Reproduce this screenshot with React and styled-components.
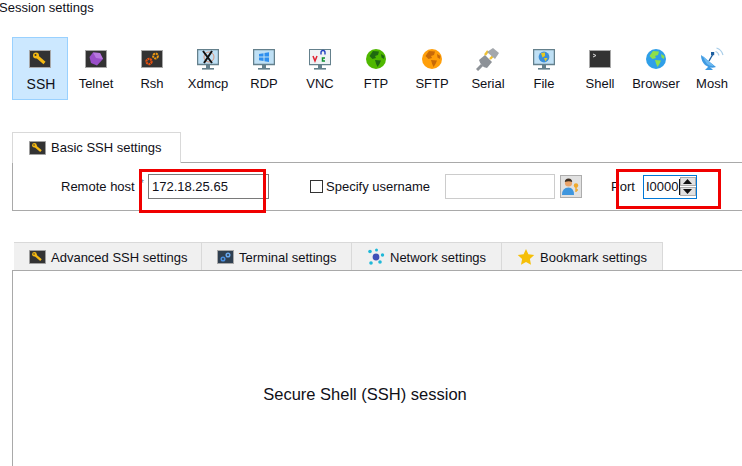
import React from 'react'
import styled, { createGlobalStyle } from 'styled-components'

const Global = createGlobalStyle`
  html, body { margin: 0; padding: 0; background: #fff; }
  body { font-family: "Liberation Sans", Arial, sans-serif; font-size: 13px; color: #101018; }
`

const KeyIcon = ({ size = 22, height = 18 }) => (
  <svg width={size} height={height} viewBox="0 0 22 18">
    <rect x="0.5" y="0.5" width="21" height="17" fill="#333" stroke="#a8a8a8" />
    <circle cx="7" cy="5.5" r="3" fill="#f5b912" />
    <path d="M8 6.5 L15.5 13" stroke="#f5b912" strokeWidth="3" />
    <circle cx="6.5" cy="5" r="1" fill="#333" />
  </svg>
)

const GemIcon = () => (
  <svg width="22" height="18" viewBox="0 0 22 18">
    <rect x="0.5" y="0.5" width="21" height="17" fill="#333" stroke="#a8a8a8" />
    <path d="M8 2.5 L15 3 L18 9 L12 15.5 L6 13 L4.5 7 Z" fill="#9a4fc9" />
    <path d="M8 2.5 L15 3 L18 9 L11 8 Z" fill="#b878e0" />
  </svg>
)

const GearsIcon = () => (
  <svg width="22" height="18" viewBox="0 0 22 18">
    <rect x="0.5" y="0.5" width="21" height="17" fill="#333" stroke="#a8a8a8" />
    <circle cx="8" cy="11.5" r="2.6" fill="none" stroke="#e8500f" strokeWidth="2.2" strokeDasharray="2 0.6" />
    <circle cx="14.5" cy="6" r="2.4" fill="none" stroke="#f09a10" strokeWidth="2" strokeDasharray="2 0.6" />
  </svg>
)

const Monitor = ({ children }) => (
  <svg width="22" height="21" viewBox="0 0 22 21">
    <rect x="0.5" y="0.5" width="21" height="15" fill="#bfe0f5" stroke="#64808c" strokeWidth="1.5" />
    <rect x="9" y="16" width="4" height="3" fill="#64808c" />
    <rect x="5" y="19" width="12" height="1.6" fill="#64808c" />
    {children}
  </svg>
)

const Globe = ({ sea, land, size = 20 }) => (
  <svg width={size} height={size} viewBox="0 0 20 20">
    <circle cx="10" cy="10" r="10" fill={sea} />
    <path d="M7 2 L13 2.5 L12 6 L9 7 L10 9 L6.5 10 L3.5 7 Z" fill={land} />
    <path d="M9 11 L15 11.5 L13.5 15 L11.5 18 L10 14.5 Z" fill={land} />
    <path d="M15 5 L18.5 7 L18 10 L15.5 8.5 Z" fill={land} />
  </svg>
)

const PlugIcon = () => (
  <svg width="24" height="24" viewBox="0 0 24 24">
    <path d="M1 23 L6 18" stroke="#8d9298" strokeWidth="3" />
    <path d="M3 13 L9 8 L16 15 L11 21 Q5 20 3 13 Z" fill="#8d9298" />
    <path d="M9 8 L12 4 M14 12 L17 9" stroke="#f1c232" strokeWidth="2.4" />
    <path d="M11 5 L17 1 L23 6 L19 12 Z" fill="#a3a7ac" />
  </svg>
)

const TermIcon = () => (
  <svg width="22" height="18" viewBox="0 0 22 18">
    <rect x="0.5" y="0.5" width="21" height="17" fill="#333" stroke="#a8a8a8" />
    <path d="M4 4 L7 5.5 L4 7" fill="none" stroke="#ddd" strokeWidth="1" />
  </svg>
)

const DishIcon = () => (
  <svg width="24" height="24" viewBox="0 0 24 24">
    <path d="M1 8 Q1 14 5 18 Q10 22 16 20 Z" fill="#3f9ae2" />
    <path d="M3 9 L14 19 Q6 20 3 9 Z" fill="#6bb8f0" />
    <path d="M5 23 L9 19 L13 23 Z" fill="#3f9ae2" />
    <path d="M9 14 L13 7" stroke="#1d5fa0" strokeWidth="1.4" />
    <rect x="11" y="5" width="3.2" height="3.2" fill="#1d5fa0" />
    <path d="M15.5 4.5 Q18 5 19 8.5 M16.5 1 Q21.5 2.5 23 8" fill="none" stroke="#a8cde8" strokeWidth="1.2" />
  </svg>
)

const NetIcon = () => (
  <svg width="18" height="18" viewBox="0 0 18 18">
    <circle cx="9" cy="9" r="3.4" fill="#4050b8" />
    <circle cx="3" cy="3.5" r="1.8" fill="#1fb8d8" />
    <circle cx="9.5" cy="2" r="1.5" fill="#1fb8d8" />
    <circle cx="15.5" cy="7" r="1.7" fill="#1fb8d8" />
    <circle cx="13" cy="14" r="1.8" fill="#1fb8d8" />
    <circle cx="4" cy="15" r="1.8" fill="#1fb8d8" />
  </svg>
)

const StarIcon = () => (
  <svg width="18" height="18" viewBox="0 0 18 18">
    <path d="M9 1 L11.4 6.3 L17.2 7 L12.9 11 L14 16.8 L9 13.9 L4 16.8 L5.1 11 L0.8 7 L6.6 6.3 Z" fill="#f5bf08" />
  </svg>
)

const UserKeyIcon = () => (
  <svg width="20" height="20" viewBox="0 0 20 20">
    <circle cx="7.5" cy="6" r="3.6" fill="#e9a36a" />
    <path d="M3.8 5 Q4 1.5 7.5 1.5 Q11 1.5 11.2 5 Q8 3.5 3.8 5 Z" fill="#3a2c20" />
    <path d="M1 18 Q1 10.5 7.5 10.5 Q13 10.5 13 18 Z" fill="#3e96de" />
    <circle cx="15" cy="8.5" r="2.2" fill="#f0a92a" />
    <path d="M15 10 V15 M15 13 H17" stroke="#f0a92a" strokeWidth="1.4" />
  </svg>
)

function GearsTab() {
  return (
    <svg width="17" height="14" viewBox="0 0 17 14">
      <rect x="0.5" y="0.5" width="16" height="13" fill="#2f3f50" stroke="#a8a8a8" />
      <circle cx="6" cy="9" r="1.8" fill="none" stroke="#4a8fe0" strokeWidth="1.5" />
      <circle cx="11" cy="5" r="1.8" fill="none" stroke="#6aa8ee" strokeWidth="1.5" />
    </svg>
  )
}

const sessions = [
  { label: 'SSH', icon: <KeyIcon />, active: true },
  { label: 'Telnet', icon: <GemIcon /> },
  { label: 'Rsh', icon: <GearsIcon /> },
  {
    label: 'Xdmcp',
    icon: (
      <Monitor>
        <circle cx="12" cy="8" r="5" fill="none" stroke="#e0805a" strokeWidth="0.8" />
        <path d="M6 2 L15 14 M15 2 L7 14" stroke="#111" strokeWidth="2" />
      </Monitor>
    ),
  },
  {
    label: 'RDP',
    icon: (
      <Monitor>
        <path d="M6 5 L10.5 4.2 V7.6 H6 Z M11.5 4 L16 3.2 V7.6 H11.5 Z M6 8.6 H10.5 V12 L6 11.2 Z M11.5 8.6 H16 V13 L11.5 12.2 Z" fill="#2f8fee" />
      </Monitor>
    ),
  },
  {
    label: 'VNC',
    icon: (
      <Monitor>
        <rect x="1" y="1" width="20" height="14" fill="#eef2f5" />
        <path d="M4 7 L6 12 L8 7" fill="none" stroke="#e02030" strokeWidth="1.5" />
        <path d="M12 3.5 A2 2 0 0 1 16 3.5 V5.5 M12 3.5 V5.5" fill="none" stroke="#2040c0" strokeWidth="1.4" />
        <path d="M16 9 H13.5 V12 H16" fill="none" stroke="#109030" strokeWidth="1.5" />
      </Monitor>
    ),
  },
  { label: 'FTP', icon: <Globe sea="#4fb800" land="#1f6a10" /> },
  { label: 'SFTP', icon: <Globe sea="#ff9f0a" land="#c86a08" /> },
  { label: 'Serial', icon: <PlugIcon /> },
  {
    label: 'File',
    icon: (
      <Monitor>
        <circle cx="11" cy="8" r="5.4" fill="#3c8fd8" />
        <path d="M8 4 L12 3.4 L12 7 L9.5 8.5 Z M11 9 L14.5 9 L12.5 12.5 Z" fill="#e6c820" />
      </Monitor>
    ),
  },
  { label: 'Shell', icon: <TermIcon /> },
  { label: 'Browser', icon: <Globe sea="#2f9fe8" land="#8ee04a" /> },
  { label: 'Mosh', icon: <DishIcon /> },
]

const lowerTabs = [
  { label: 'Advanced SSH settings', icon: <KeyIcon size={17} height={14} />, width: 188 },
  { label: 'Terminal settings', icon: <GearsTab />, width: 150 },
  { label: 'Network settings', icon: <NetIcon />, width: 150 },
  { label: 'Bookmark settings', icon: <StarIcon />, width: 161 },
]

export default function App() {
  return (
    <Page>
      <Global />
      <Title>Session settings</Title>

      <SessionBar>
        {sessions.map((s) => (
          <SessionButton key={s.label} $active={s.active}>
            <IconSlot>{s.icon}</IconSlot>
            <SessionLabel $active={s.active}>{s.label}</SessionLabel>
          </SessionButton>
        ))}
      </SessionBar>

      <BasicTabRow>
        <BasicTab>
          <KeyIcon size={17} height={14} />
          <TabText $shift={-1}>Basic SSH settings</TabText>
        </BasicTab>
      </BasicTabRow>

      <BasicPanel>
        <HostLabel>Remote host</HostLabel>
        <Asterisk>*</Asterisk>
        <TextBox>172.18.25.65</TextBox>
        <Check />
        <CheckLabel>Specify username</CheckLabel>
        <UserBox />
        <UserButton>
          <UserKeyIcon />
        </UserButton>
        <PortLabel>Port</PortLabel>
        <PortBox>
          <PortValue>I0000</PortValue>
          <Spinner>
            <SpinButton>
              <svg width="9" height="5" viewBox="0 0 9 5"><path d="M4.5 0 L9 5 H0 Z" fill="#111" /></svg>
            </SpinButton>
            <SpinButton>
              <svg width="9" height="5" viewBox="0 0 9 5"><path d="M4.5 5 L9 0 H0 Z" fill="#111" /></svg>
            </SpinButton>
          </Spinner>
        </PortBox>
      </BasicPanel>

      <LowerTabRow>
        {lowerTabs.map((t) => (
          <LowerTab key={t.label} $width={t.width}>
            {t.icon}
            <TabText $shift={1}>{t.label}</TabText>
          </LowerTab>
        ))}
      </LowerTabRow>

      <LowerPanel>
        <PanelText>Secure Shell (SSH) session</PanelText>
      </LowerPanel>

      <HostMark />
      <PortMark />
    </Page>
  )
}

const Page = styled.div`
  position: relative;
  width: 742px;
  height: 466px;
  overflow: hidden;
  background: #fff;
  display: flex;
  flex-direction: column;
`

const Title = styled.div`
  height: 37px;
  line-height: 15px;
  margin-left: -1px;
`

const SessionBar = styled.div`
  display: flex;
  padding-left: 12px;
  height: 63px;
`

const SessionButton = styled.div`
  width: 56px;
  height: 63px;
  box-sizing: border-box;
  display: flex;
  flex-direction: column;
  align-items: center;
  padding-top: 9px;
  background: ${(p) => (p.$active ? '#cce8ff' : 'transparent')};
  border: 1px solid ${(p) => (p.$active ? '#99d1ff' : 'transparent')};
`

const IconSlot = styled.div`
  width: 24px;
  height: 24px;
  display: flex;
  align-items: center;
  justify-content: center;
`

const SessionLabel = styled.div`
  margin-top: 5px;
  margin-left: ${(p) => (p.$active ? 2 : 0)}px;
  font-size: ${(p) => (p.$active ? 14 : 13)}px;
  line-height: 16px;
  white-space: nowrap;
`

const TabText = styled.span`
  margin-top: ${(p) => (p.$shift > 0 ? p.$shift * 2 : 0)}px;
  margin-bottom: ${(p) => (p.$shift < 0 ? -p.$shift * 2 : 0)}px;
`

const BasicTabRow = styled.div`
  display: flex;
  margin-top: 32px;
  padding-left: 12px;
  height: 30px;
`

const BasicTab = styled.div`
  width: 169px;
  height: 31px;
  box-sizing: border-box;
  border: 1px solid #d9d9d9;
  border-bottom: none;
  background: #fff;
  display: flex;
  align-items: center;
  gap: 5px;
  padding-left: 16px;
  position: relative;
  z-index: 1;
`

const BasicPanel = styled.div`
  margin-left: 12px;
  height: 49px;
  box-sizing: border-box;
  border: 1px solid #a9a9a9;
  border-right: none;
  display: flex;
  align-items: center;
  padding-left: 48px;
`

const HostLabel = styled.span`
  width: 79px;
`

const Asterisk = styled.span`
  width: 8px;
  color: #777;
  font-size: 10px;
  align-self: flex-start;
  padding-top: 15px;
`

const TextBox = styled.div`
  width: 121px;
  height: 25px;
  box-sizing: border-box;
  border: 1px solid #7a7a7a;
  padding-left: 3px;
  line-height: 23px;
`

const Check = styled.div`
  width: 13px;
  height: 13px;
  margin-left: 41px;
  box-sizing: border-box;
  border: 1px solid #333;
`

const CheckLabel = styled.span`
  margin-left: 3px;
  width: 119px;
`

const UserBox = styled.div`
  width: 110px;
  height: 25px;
  box-sizing: border-box;
  border: 1px solid #ccc;
`

const UserButton = styled.div`
  width: 22px;
  height: 23px;
  margin-left: 5px;
  box-sizing: border-box;
  border: 1px solid #adadad;
  background: #e1e1e1;
  display: flex;
  align-items: center;
  justify-content: center;
`

const PortLabel = styled.span`
  margin-left: 29px;
  width: 32px;
`

const PortBox = styled.div`
  width: 54px;
  height: 24px;
  box-sizing: border-box;
  border: 1px solid #0078d7;
  display: flex;
  justify-content: space-between;
  align-items: center;
  padding: 0 1px 0 2px;
`

const PortValue = styled.span`
  border-right: 1px solid #111;
  line-height: 16px;
`

const Spinner = styled.div`
  display: flex;
  flex-direction: column;
  gap: 1px;
`

const SpinButton = styled.div`
  width: 16px;
  height: 9px;
  box-sizing: border-box;
  background: #e1e1e1;
  border: 1px solid #adadad;
  display: flex;
  align-items: center;
  justify-content: center;
`

const LowerTabRow = styled.div`
  display: flex;
  margin-top: 31px;
  padding-left: 14px;
  height: 28px;
`

const LowerTab = styled.div`
  width: ${(p) => p.$width}px;
  box-sizing: border-box;
  background: #f0f0f0;
  border: 1px solid #d9d9d9;
  border-left: none;
  border-bottom: none;
  display: flex;
  align-items: center;
  gap: 5px;
  padding-left: 15px;
`

const LowerPanel = styled.div`
  margin-left: 12px;
  flex: 1;
  border-top: 1px solid #a9a9a9;
  border-left: 1px solid #a9a9a9;
  display: flex;
  justify-content: center;
  padding-top: 113px;
  padding-right: 25px;
`

const PanelText = styled.div`
  font-size: 16.5px;
  line-height: 20px;
  height: 20px;
`

const RedMark = styled.div`
  position: absolute;
  box-sizing: border-box;
  border: 3px solid #f00000;
`

const HostMark = styled(RedMark)`
  left: 139px;
  top: 169px;
  width: 127px;
  height: 44px;
`

const PortMark = styled(RedMark)`
  left: 616px;
  top: 169px;
  width: 105px;
  height: 40px;
`
